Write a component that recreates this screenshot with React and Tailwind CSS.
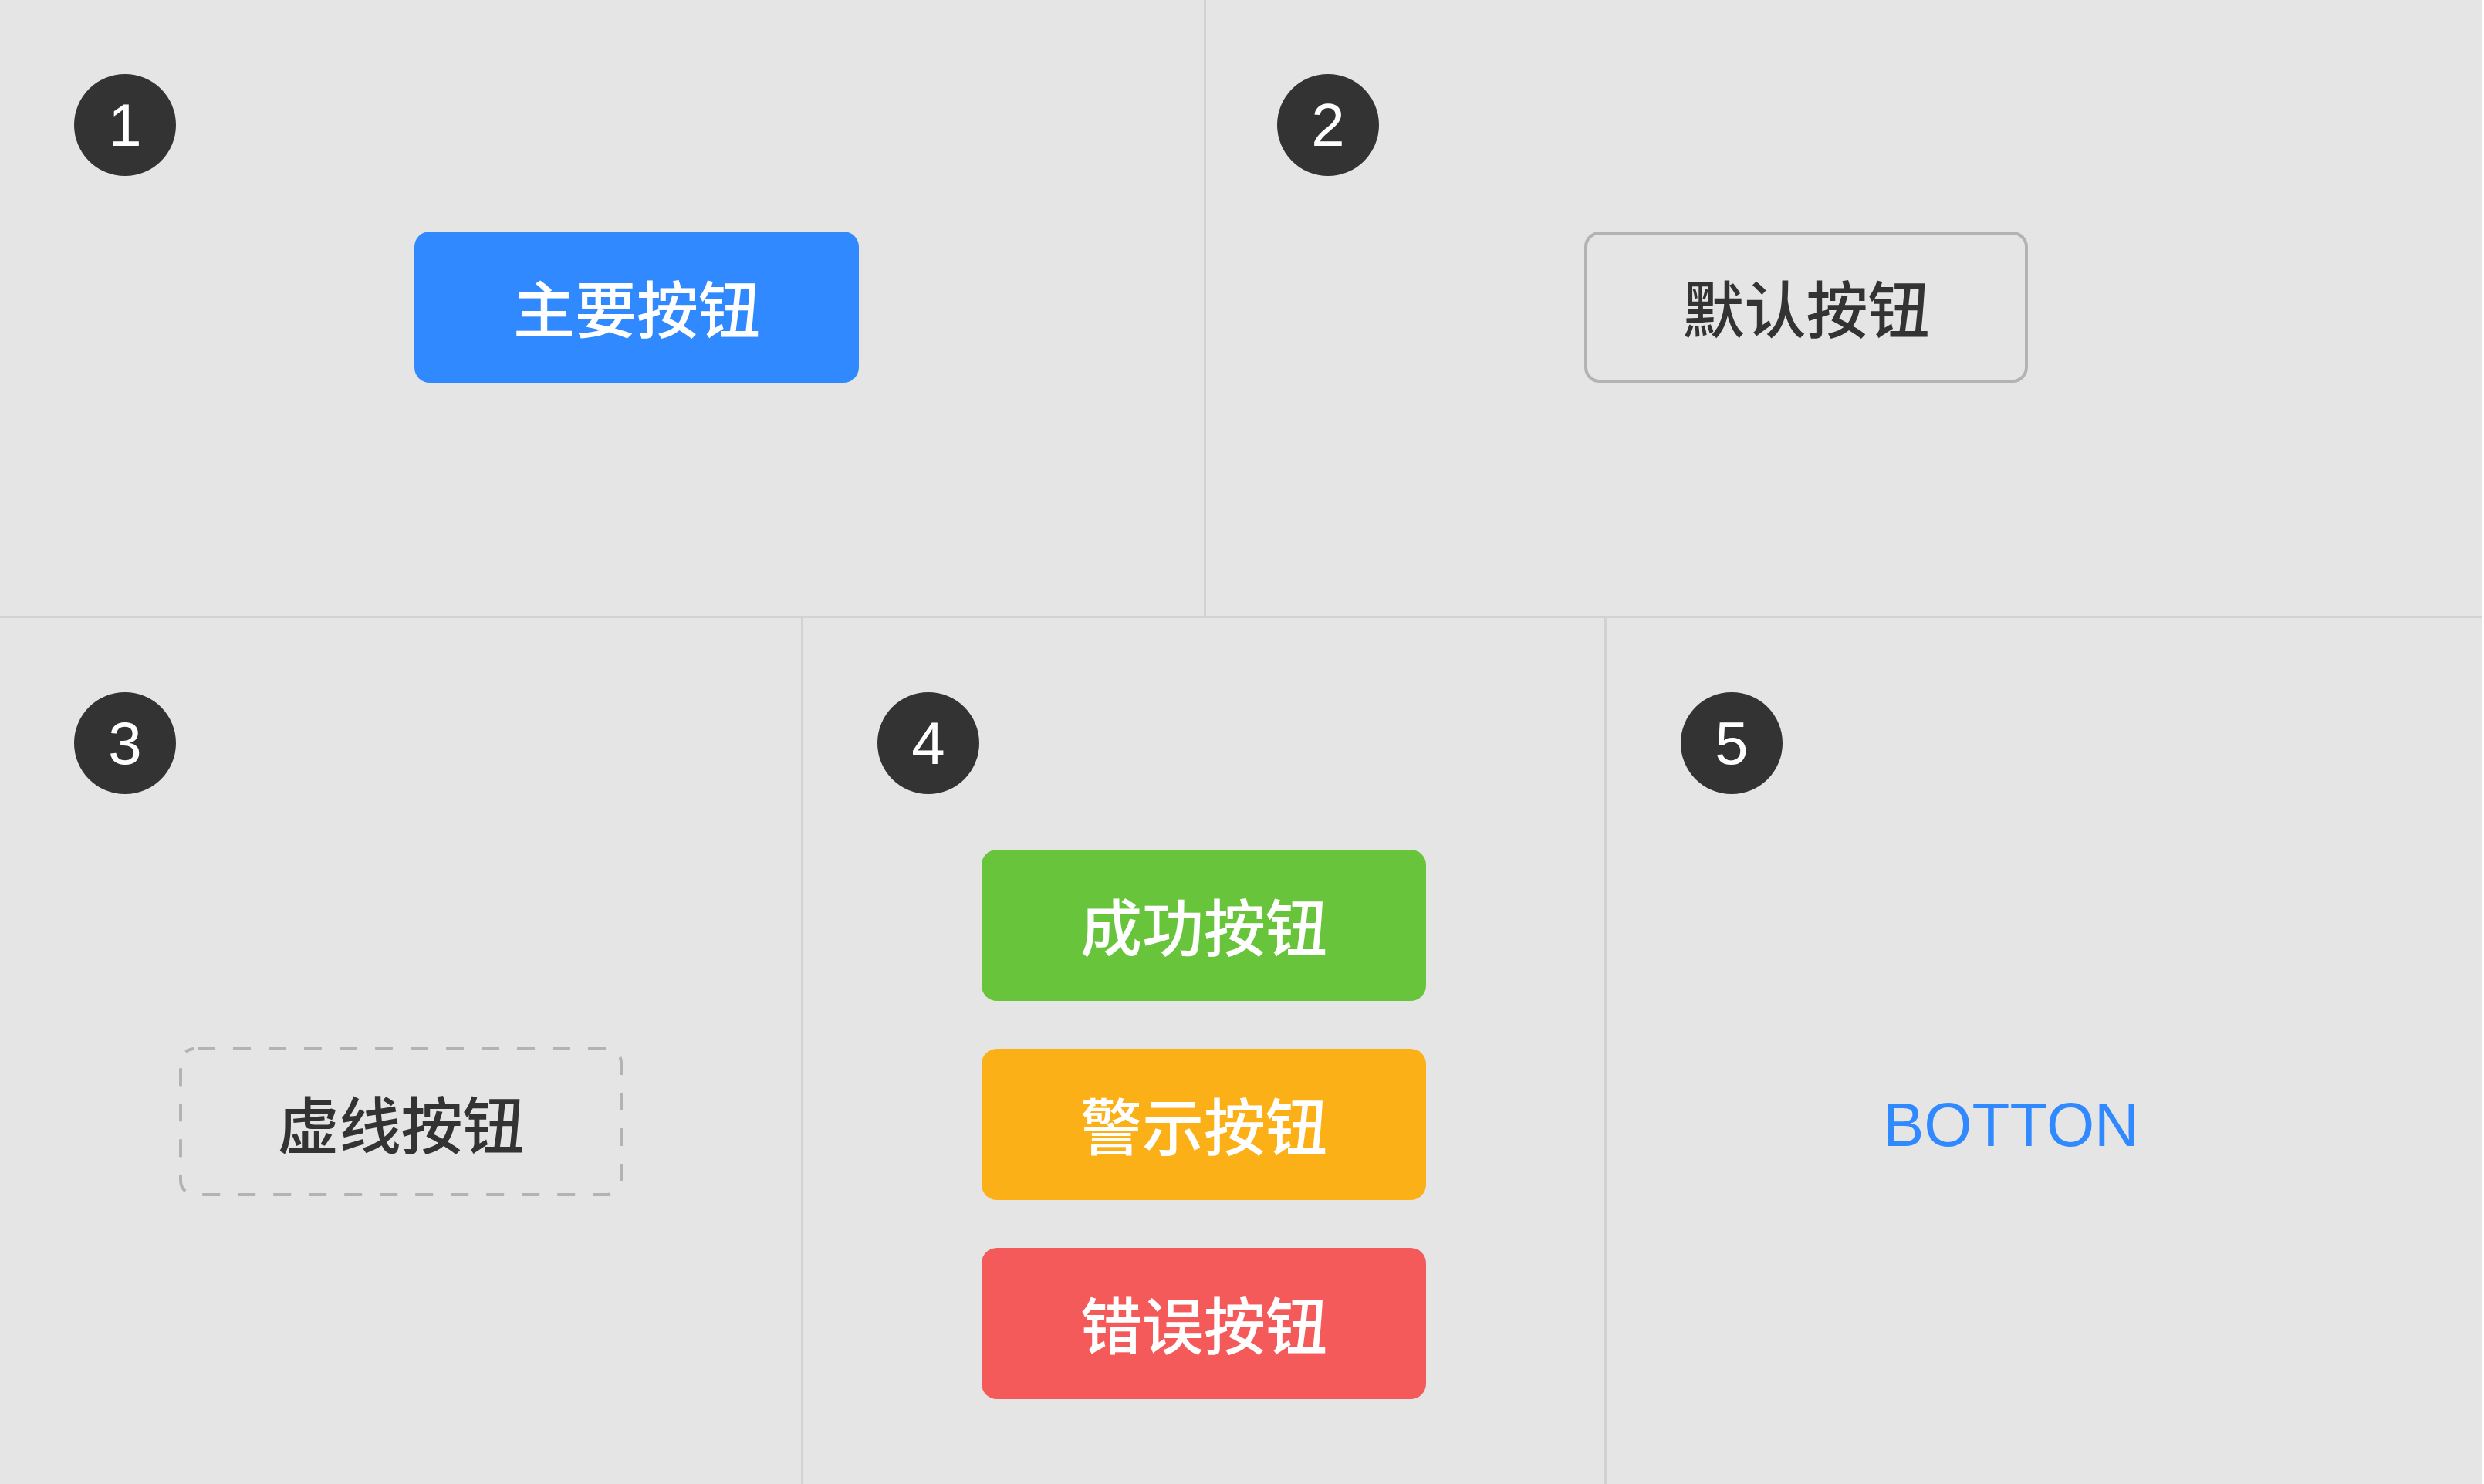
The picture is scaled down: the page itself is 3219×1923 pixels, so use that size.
import React from "react";

const cjk = "font-['Noto_Sans_CJK_SC','Noto_Sans',sans-serif] font-medium";

function Badge({ n }) {
  return (
    <div className="w-[132px] h-[132px] rounded-full bg-[#333333] flex items-center justify-center text-white text-[78px] leading-none font-['Liberation_Sans',Arial,sans-serif]">
      {n}
    </div>
  );
}

function SolidButton({ label, color, className = "" }) {
  return (
    <div
      className={`w-[576px] h-[196px] pb-[5px] rounded-[20px] flex items-center justify-center text-white text-[80px] leading-none ${cjk} ${color} ${className}`}
    >
      {label}
    </div>
  );
}

export default function App() {
  return (
    <div className="w-[3216px] h-[1923px] bg-[#e5e5e5] flex flex-col overflow-hidden">
      {/* top row */}
      <div className="h-[801px] flex border-b-[3px] border-[#d0d3d6]">
        <div className="w-[1563px] border-r-[3px] border-[#d0d3d6] pt-[96px] pl-[96px] flex flex-col">
          <Badge n="1" />
          <SolidButton label="主要按钮" color="bg-[#3089ff]" className="mt-[72px] ml-[441px] w-[575px]" />
        </div>
        <div className="flex-1 pt-[96px] pl-[92px] flex flex-col">
          <Badge n="2" />
          <div
            className={`mt-[72px] ml-[398px] w-[575px] h-[196px] pb-[5px] rounded-[20px] border-4 border-[#b3b3b3] flex items-center justify-center text-[#333333] text-[80px] leading-none ${cjk}`}
          >
            默认按钮
          </div>
        </div>
      </div>

      {/* bottom row */}
      <div className="flex-1 flex">
        <div className="w-[1041px] border-r-[3px] border-[#d0d3d6] pt-[96px] pl-[96px] flex flex-col">
          <Badge n="3" />
          <div
            className={`relative mt-[328px] ml-[136px] w-[575px] h-[193px] pb-[2px] flex items-center justify-center text-[#333333] text-[80px] leading-none ${cjk}`}
          >
            <svg className="absolute inset-0" width="575" height="193">
              <rect
                x="2"
                y="2"
                width="571"
                height="189"
                rx="18"
                fill="none"
                stroke="#b3b3b3"
                strokeWidth="4"
                strokeDasharray="23 23"
                strokeDashoffset="-4"
              />
            </svg>
            <span className="relative">虚线按钮</span>
          </div>
        </div>
        <div className="w-[1041px] border-r-[3px] border-[#d0d3d6] pt-[96px] pl-[96px] flex flex-col">
          <Badge n="4" />
          <div className="mt-[72px] ml-[135px] flex flex-col gap-[62px]">
            <SolidButton label="成功按钮" color="bg-[#67c43b]" />
            <SolidButton label="警示按钮" color="bg-[#fbb018]" />
            <SolidButton label="错误按钮" color="bg-[#f55a5a]" />
          </div>
        </div>
        <div className="flex-1 pt-[96px] pl-[96px] flex flex-col">
          <Badge n="5" />
          <div className="mt-[389px] ml-[262px] text-[80px] leading-[80px] text-[#3089ff] font-['Liberation_Sans',Arial,sans-serif]">
            BOTTON
          </div>
        </div>
      </div>
    </div>
  );
}
